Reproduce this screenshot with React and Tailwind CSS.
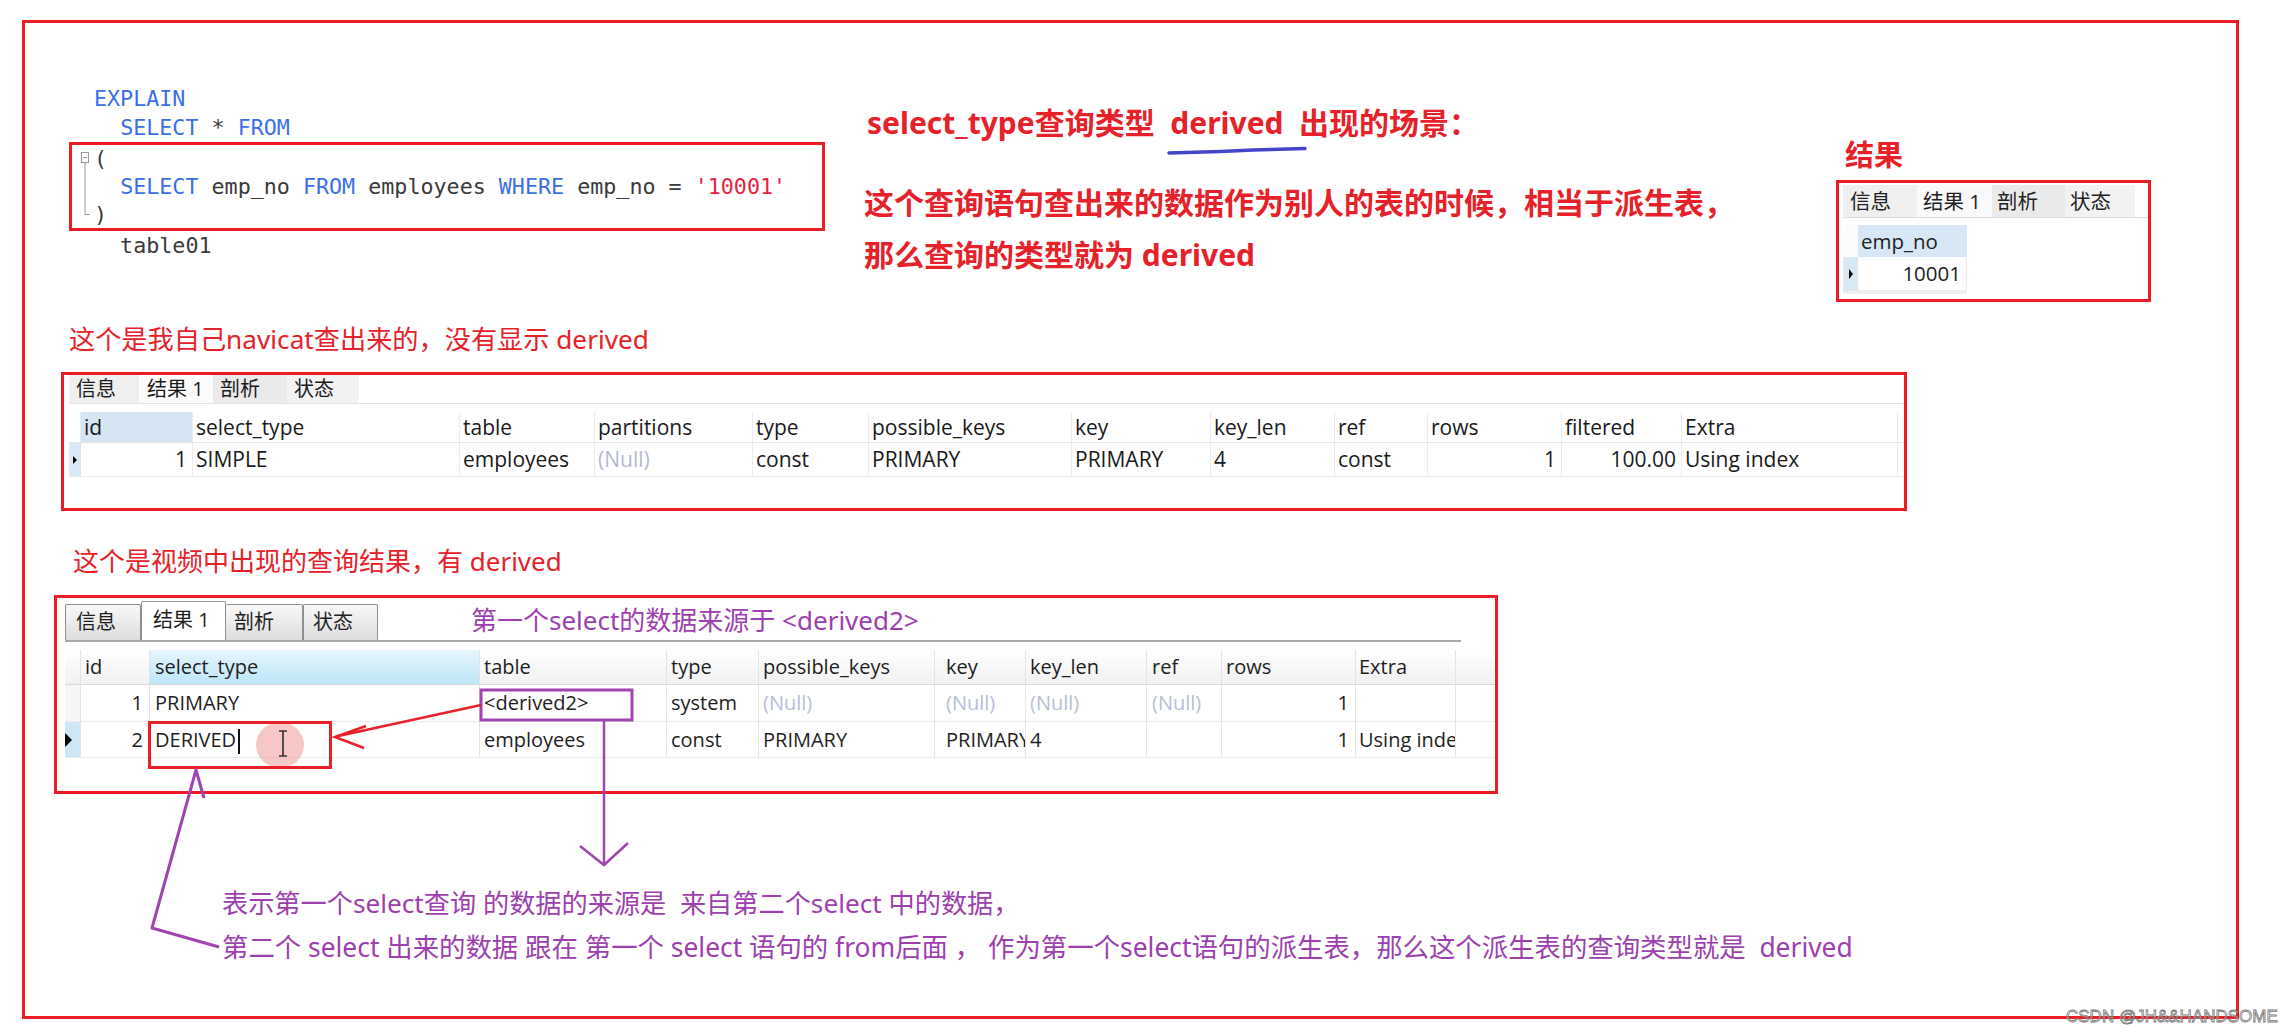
import React from "react";

const CJK = "font-['Noto_Sans','Noto_Sans_CJK_SC',sans-serif]";
const UI = "font-['Open_Sans','Noto_Sans_CJK_SC',sans-serif]";

const K = ({ children }) => <span className="text-[#3b6fe8]">{children}</span>;
const S = ({ children }) => <span className="text-[#e6223f]">{children}</span>;

function CodeBlock() {
  return (
    <div className="ml-[44px] mt-[61px] w-[756px] shrink-0 font-['DejaVu_Sans_Mono',monospace] text-[21.7px] text-[#3a3a3a] whitespace-pre">
      <div className="h-[29px] leading-[29px] pl-[25px]">
        <K>EXPLAIN</K>
      </div>
      <div className="h-[29px] leading-[29px] pl-[25px]">
        {"  "}
        <K>SELECT</K>
        {" * "}
        <K>FROM</K>
      </div>
      <div className="h-[89px] border-[3px] border-[#ec1c24] pl-[22px]">
        <div className="h-[28px] leading-[28px]">(</div>
        <div className="h-[28px] leading-[28px]">
          {"  "}
          <K>SELECT</K>
          {" emp_no "}
          <K>FROM</K>
          {" employees "}
          <K>WHERE</K>
          {" emp_no = "}
          <S>'10001'</S>
        </div>
        <div className="h-[28px] leading-[28px]">)</div>
      </div>
      <div className="h-[29px] leading-[29px] pl-[25px]">{"  table01"}</div>
    </div>
  );
}

function Title() {
  return (
    <div className={"ml-[39px] mt-[74px] w-[972px] shrink-0 font-bold text-[#e62129] text-[30px] whitespace-pre " + CJK}>
      <div className="h-[52px] leading-[52px] pl-[3px]">select_type查询类型  derived  出现的场景：</div>
      <div className="mt-[28px] h-[52px] leading-[52px]">这个查询语句查出来的数据作为别人的表的时候，相当于派生表，</div>
      <div className="h-[52px] leading-[52px]">那么查询的类型就为 derived</div>
    </div>
  );
}

function ResultPanel() {
  return (
    <div className="mt-[112px] w-[315px] shrink-0">
      <div className={"h-[40px] leading-[40px] pl-[9px] text-[29px] font-bold text-[#e62129] " + CJK}>结果</div>
      <div className={"mt-[5px] h-[122px] border-[3px] border-[#ec1c24] pl-[4px] pt-[2px] text-[20.5px] text-[#222] " + UI}>
        <div className="flex h-[32px]">
          <div className="w-[74px] bg-[#efefef] pl-[7px] leading-[32px]">信息</div>
          <div className="w-[75px] bg-[#fafafa] pl-[6px] leading-[32px]">结果 1</div>
          <div className="w-[73px] bg-[#eaeaea] pl-[5px] leading-[32px]">剖析</div>
          <div className="w-[70px] bg-[#f2f2f2] pl-[5px] leading-[32px]">状态</div>
        </div>
        <div className="h-px bg-[#dcdcdc]" />
        <div className="mt-[7px] w-[124px]">
          <div className="flex h-[32px]">
            <div className="w-[15px] bg-[#fbfbfb]" />
            <div className="w-[109px] bg-[#d7e7f5] pl-[3px] leading-[32px]">emp_no</div>
          </div>
          <div className="flex h-[34px]">
            <div className="w-[15px] bg-[#dae8f4] flex items-center justify-center">
              <div className="w-0 h-0 border-y-[5px] border-y-transparent border-l-[4px] border-l-black" />
            </div>
            <div className="w-[109px] bg-white text-right pr-[5px] border-r border-b border-[#eeeeee] leading-[33px]">10001</div>
          </div>
          <div className="h-[3px] bg-[#efefef]" />
        </div>
      </div>
    </div>
  );
}

const t1 = [
  { w: "w-[112px]", h: "id", v: "1", right: true, hb: "bg-[#d5e5f4]" },
  { w: "w-[267px]", h: "select_type", v: "SIMPLE" },
  { w: "w-[135px]", h: "table", v: "employees" },
  { w: "w-[158px]", h: "partitions", v: "(Null)", nul: true },
  { w: "w-[116px]", h: "type", v: "const" },
  { w: "w-[203px]", h: "possible_keys", v: "PRIMARY" },
  { w: "w-[139px]", h: "key", v: "PRIMARY" },
  { w: "w-[124px]", h: "key_len", v: "4" },
  { w: "w-[93px]", h: "ref", v: "const" },
  { w: "w-[134px]", h: "rows", v: "1", right: true },
  { w: "w-[120px]", h: "filtered", v: "100.00", right: true },
  { w: "w-[216px]", h: "Extra", v: "Using index" },
];

function Table1() {
  return (
    <div className={"mt-[15px] ml-[36px] w-[1846px] h-[139px] shrink-0 border-[3px] border-[#ec1c24] pl-[5px] text-[21px] text-[#1a1a1a] " + UI}>
      <div className="flex h-[28px] text-[20px]">
        <div className="w-[70px] bg-[#efefef] pl-[7px] leading-[28px]">信息</div>
        <div className="w-[74px] bg-[#fbfbfb] pl-[8px] leading-[28px]">结果 1</div>
        <div className="w-[74px] bg-[#eaeaea] pl-[7px] leading-[28px]">剖析</div>
        <div className="w-[72px] bg-[#f2f2f2] pl-[7px] leading-[28px]">状态</div>
      </div>
      <div className="h-px bg-[#e2e2e2]" />
      <div className="mt-[8px]">
        <div className="flex h-[31px] border-b border-[#e6e6e6]">
          <div className="w-[12px] shrink-0 border-r border-[#ebebeb]" />
          {t1.map((c) => (
            <div
              key={c.h}
              className={c.w + " shrink-0 border-r border-[#ebebeb] pl-[3px] leading-[30px] whitespace-nowrap overflow-hidden " + (c.hb || "bg-white")}
            >
              {c.h}
            </div>
          ))}
        </div>
        <div className="flex h-[34px] border-b border-[#ececec]">
          <div className="w-[12px] shrink-0 bg-[#dae8f5] flex items-center justify-center">
            <div className="w-0 h-0 border-y-[4px] border-y-transparent border-l-[4px] border-l-black" />
          </div>
          {t1.map((c) => (
            <div
              key={c.h}
              className={
                c.w +
                " shrink-0 border-r border-[#ebebeb] leading-[33px] whitespace-nowrap overflow-hidden " +
                (c.right ? "text-right pr-[5px]" : "pl-[3px]") +
                (c.nul ? " text-[#b3bbd3]" : "")
              }
            >
              {c.v}
            </div>
          ))}
        </div>
      </div>
    </div>
  );
}

const Null2 = () => <span className="text-[#b8c0d8]">(Null)</span>;

const t2 = [
  { w: "w-[69px]", h: "id", v1: "1", v2: "2", right: true, pl: "pl-[4px]" },
  { w: "w-[330px]", h: "select_type", v1: "PRIMARY", v2: "DERIVED", caret: true, pl: "pl-[5px]", hb: "bg-linear-to-b from-[#e6f6fd] to-[#bde5f7]" },
  { w: "w-[187px]", h: "table", v1: "<derived2>", v2: "employees", pl: "pl-[4px]" },
  { w: "w-[92px]", h: "type", v1: "system", v2: "const", pl: "pl-[4px]" },
  { w: "w-[176px]", h: "possible_keys", v1: null, v2: "PRIMARY", pl: "pl-[4px]" },
  { w: "w-[91px]", h: "key", v1: null, v2: "PRIMARY", pl: "pl-[11px]" },
  { w: "w-[121px]", h: "key_len", v1: null, v2: "4", pl: "pl-[4px]" },
  { w: "w-[75px]", h: "ref", v1: null, v2: "", pl: "pl-[5px]" },
  { w: "w-[134px]", h: "rows", v1: "1", v2: "1", right: true, pl: "pl-[4px]" },
  { w: "w-[100px]", h: "Extra", v1: "", v2: "Using index", pl: "pl-[3px]" },
];

function Table2() {
  const cellCls = (c) =>
    c.w + " shrink-0 border-r border-[#e4e4e4] whitespace-nowrap overflow-hidden " + (c.right ? "text-right pr-[6px]" : c.pl);
  const headCls = (c) => c.w + " shrink-0 border-r border-[#e4e4e4] whitespace-nowrap overflow-hidden " + c.pl;
  return (
    <div className={"mt-[16px] ml-[29px] w-[1444px] h-[199px] shrink-0 border-[3px] border-[#ec1c24] pl-[8px] pt-[3px] text-[20px] text-[#1e1e1e] " + UI}>
      <div className="flex items-end h-[39px]">
        <div className="h-[36px] w-[76px] border border-b-0 border-[#8f8f8f] rounded-t-[2px] bg-linear-to-b from-[#f8f8f8] to-[#dddddd] pl-[10px] leading-[34px]">信息</div>
        <div className="h-[39px] w-[85px] border border-b-0 border-[#8f8f8f] rounded-t-[2px] bg-white pl-[11px] leading-[36px]">结果 1</div>
        <div className="h-[36px] w-[77px] border border-b-0 border-l-0 border-[#8f8f8f] rounded-t-[2px] bg-linear-to-b from-[#f8f8f8] to-[#dddddd] pl-[8px] leading-[34px]">剖析</div>
        <div className="h-[36px] w-[75px] border border-b-0 border-[#8f8f8f] rounded-t-[2px] bg-linear-to-b from-[#f8f8f8] to-[#dddddd] pl-[9px] leading-[34px]">状态</div>
        <div className={"ml-[93px] self-center h-[39px] leading-[39px] text-[26px] text-[#9d3fae] whitespace-pre " + CJK}>第一个select的数据来源于 &lt;derived2&gt;</div>
      </div>
      <div className="h-[2px] w-[1396px] bg-[#a9a9a9]" />
      <div className="mt-[8px]">
        <div className="flex h-[35px] border-b border-[#d9d9d9] bg-linear-to-b from-white to-[#f1f1f1]">
          <div className="w-[16px] shrink-0 border-r border-[#e4e4e4]" />
          {t2.map((c) => (
            <div key={c.h} className={headCls(c) + " leading-[34px] " + (c.hb || "")}>
              {c.h}
            </div>
          ))}
        </div>
        <div className="flex h-[37px] border-b border-[#ececec]">
          <div className="w-[16px] shrink-0 border-r border-[#e4e4e4] bg-[#f6f6f6]" />
          {t2.map((c) => (
            <div key={c.h} className={cellCls(c) + " leading-[36px]"}>
              {c.v1 === null ? <Null2 /> : c.v1}
            </div>
          ))}
        </div>
        <div className="flex h-[36px] border-b border-[#ececec]">
          <div className="w-[16px] shrink-0 border-r border-[#e4e4e4] bg-[#cfe6f4] flex items-center">
            <div className="w-0 h-0 border-y-[7px] border-y-transparent border-l-[7px] border-l-black" />
          </div>
          {t2.map((c) => (
            <div key={c.h} className={cellCls(c) + " leading-[35px]"}>
              {c.v2}
              {c.caret ? <span className="inline-block w-[2px] h-[25px] bg-[#111] align-middle ml-[2px]" /> : null}
            </div>
          ))}
        </div>
      </div>
    </div>
  );
}

function Overlay() {
  return (
    <svg className="absolute left-0 top-0 pointer-events-none" width="2283" height="1033" viewBox="0 0 2283 1033">
      <rect x="81.5" y="152.5" width="7" height="10" fill="white" stroke="#9a9a9a" strokeWidth="1" />
      <line x1="83" y1="157.5" x2="87" y2="157.5" stroke="#9a9a9a" strokeWidth="1" />
      <polyline points="85,163 85,214.5 90,214.5" fill="none" stroke="#9a9a9a" strokeWidth="1" />
      <polyline points="1169,153 1221,151.5 1253,150 1305,148.5" fill="none" stroke="#4545c9" strokeWidth="3.5" strokeLinecap="round" />
      <rect x="481" y="690" width="151" height="30" fill="none" stroke="#a044b0" strokeWidth="3" />
      <ellipse cx="280" cy="745" rx="24" ry="23" fill="#f2a0a0" opacity="0.6" />
      <line x1="283" y1="731" x2="283" y2="756" stroke="#2d2d2d" strokeWidth="1.6" />
      <line x1="279" y1="731" x2="287" y2="731" stroke="#2d2d2d" strokeWidth="1.4" />
      <line x1="279" y1="756" x2="287" y2="756" stroke="#2d2d2d" strokeWidth="1.4" />
      <rect x="149.5" y="722.5" width="181" height="45" fill="none" stroke="#e8202a" strokeWidth="3" />
      <line x1="481" y1="705" x2="336" y2="736.5" stroke="#e8202a" strokeWidth="2.5" />
      <polyline points="366,726 335,737 364,748" fill="none" stroke="#e8202a" strokeWidth="2.5" strokeLinejoin="miter" />
      <line x1="604" y1="721" x2="604" y2="865" stroke="#a044b0" strokeWidth="2.5" />
      <polyline points="580,846 604,865 628,843" fill="none" stroke="#a044b0" strokeWidth="2.5" />
      <polyline points="219,947 152,928 196,770 204,798" fill="none" stroke="#a044b0" strokeWidth="3" strokeLinejoin="round" />
    </svg>
  );
}

export default function App() {
  return (
    <div className="relative w-[2283px] h-[1033px] overflow-hidden bg-white pl-[22px] pt-[20px]">
      <div className="w-[2217px] h-[999px] border-[3px] border-[#ec1c24] flex flex-col">
        <div className="flex items-start h-[298px] shrink-0">
          <CodeBlock />
          <Title />
          <ResultPanel />
        </div>
        <div className={"ml-[44px] h-[36px] leading-[36px] text-[26.2px] text-[#e62129] whitespace-pre shrink-0 " + CJK}>
          这个是我自己navicat查出来的，没有显示 derived
        </div>
        <Table1 />
        <div className={"mt-[32px] ml-[48px] h-[36px] leading-[36px] text-[26px] text-[#e62129] whitespace-pre shrink-0 " + CJK}>
          这个是视频中出现的查询结果，有 derived
        </div>
        <Table2 />
        <div className={"mt-[89px] ml-[197px] text-[26.2px] text-[#9d3fae] whitespace-pre shrink-0 " + CJK}>
          <div className="h-[40px] leading-[40px]">表示第一个select查询 的数据的来源是  来自第二个select 中的数据，</div>
          <div className="mt-[4px] h-[40px] leading-[40px] text-[26.4px]">第二个 select 出来的数据 跟在 第一个 select 语句的 from后面 ， 作为第一个select语句的派生表，那么这个派生表的查询类型就是  derived</div>
        </div>
      </div>
      <Overlay />
      <div className="absolute left-[2066px] top-[1004px] whitespace-nowrap font-['Liberation_Sans',sans-serif] text-[17px] text-[rgba(255,255,255,0.4)] [-webkit-text-stroke:0.8px_#777]">
        CSDN @JH&amp;&amp;HANDSOME
      </div>
    </div>
  );
}
